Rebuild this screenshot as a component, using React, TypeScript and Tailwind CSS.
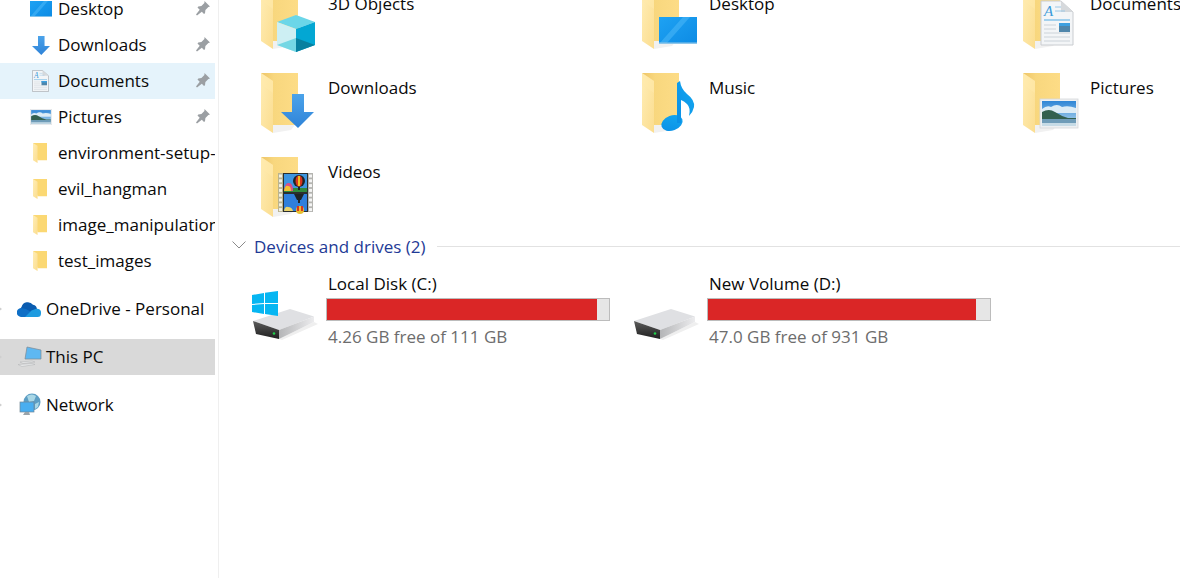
import type { ReactNode } from "react";

const font = "[font-family:'Open_Sans','Noto_Sans',sans-serif]";

function Defs() {
  return (
    <svg className="absolute h-0 w-0" aria-hidden="true">
      <defs>
        <linearGradient id="leaf" x1="0" y1="0" x2="1" y2="1">
          <stop offset="0" stopColor="#ffedb5" />
          <stop offset="1" stopColor="#fbdd8f" />
        </linearGradient>
        <linearGradient id="back" x1="0" y1="0" x2="1" y2="0">
          <stop offset="0" stopColor="#eec568" />
          <stop offset="0.35" stopColor="#f8d77e" />
          <stop offset="1" stopColor="#fddc86" />
        </linearGradient>
        <linearGradient id="sky" x1="0" y1="0" x2="0" y2="1">
          <stop offset="0" stopColor="#2f86d6" />
          <stop offset="1" stopColor="#b9dbee" />
        </linearGradient>
        <linearGradient id="screen" x1="0" y1="0" x2="1" y2="1">
          <stop offset="0" stopColor="#1ea2f3" />
          <stop offset="1" stopColor="#0d8be4" />
        </linearGradient>
        <linearGradient id="arrow" x1="0" y1="0" x2="0" y2="1">
          <stop offset="0" stopColor="#4ba3ea" />
          <stop offset="1" stopColor="#2f83d8" />
        </linearGradient>
        <linearGradient id="note" x1="0" y1="1" x2="1" y2="0">
          <stop offset="0" stopColor="#0a8fe6" />
          <stop offset="1" stopColor="#14a8f0" />
        </linearGradient>
        <linearGradient id="hdd" x1="0" y1="0" x2="1" y2="0">
          <stop offset="0" stopColor="#b4b5b7" />
          <stop offset="1" stopColor="#ececee" />
        </linearGradient>
        <linearGradient id="hddFront" x1="0" y1="0" x2="0" y2="1">
          <stop offset="0" stopColor="#5c5c5c" />
          <stop offset="1" stopColor="#1f1f1f" />
        </linearGradient>
      </defs>
    </svg>
  );
}

function Folder() {
  return (
    <g>
      <polygon points="12,52 34,52 30,57 12,60" fill="#f1f1f1" />
      <polygon points="0,0 37,0 37,52 12,52" fill="url(#back)" />
      <polygon points="0,0 12,8 12,60 0,52" fill="url(#leaf)" />
      <polygon points="0,0 12,8 12,20 0,12" fill="#ffe9a9" opacity="0.5" />
    </g>
  );
}

function ArrowShape() {
  return <polygon points="11,0 23,0 23,18 33,18 17,34 0,18 11,18" fill="url(#arrow)" />;
}

function DocShape({ edge = "#c9ccd0" }: { edge?: string }) {
  return (
    <g>
      <polygon points="0,0 20,0 32,11 32,44 0,44" fill="#f3f5f7" stroke={edge} strokeWidth="1" />
      <polygon points="20,0 32,11 20,11" fill="#d6d9dc" />
      <text x="3" y="15" fontSize="15" fontStyle="italic" fontFamily="Liberation Serif, serif" fill="#3a9ad9">
        A
      </text>
      <path d="M14 6h6M14 10h10" stroke="#9cc8e6" strokeWidth="1" />
      <path d="M3 19h26" stroke="#7fc0e8" strokeWidth="1.400" />
      <rect x="18" y="22" width="11" height="9" fill="#4f86ab" />
      <rect x="18" y="22" width="11" height="3" fill="#3da0e0" />
      <path d="M3 24h12M3 28h12M3 32h26M3 36h26M3 40h26" stroke="#ccd3d9" strokeWidth="1" />
    </g>
  );
}

function PictureShape() {
  return (
    <g>
      <rect x="0" y="0" width="38" height="29" fill="#eef0f2" stroke="#d5d7d9" strokeWidth="0.800" />
      <rect x="2" y="2" width="34" height="25" fill="url(#sky)" />
      <path d="M2 10q5-4 9-2q6-4 11 0q6-2 14 1v5H2z" fill="#dcecf6" />
      <path d="M2 13q7-4 13 0q6 4 13 6h8v2H2z" fill="#33604f" />
      <rect x="2" y="20" width="34" height="7" fill="#6f9cb8" />
      <rect x="2" y="24" width="34" height="3" fill="#c6dbe6" />
    </g>
  );
}

function MonitorShape() {
  return (
    <g>
      <rect x="0" y="0" width="38" height="27" fill="url(#screen)" />
      <polygon points="0,27 24,0 31,0 7,27" fill="#4db8f7" opacity="0.55" />
      <rect x="0" y="25.500" width="38" height="1.500" fill="#8fc7ea" />
    </g>
  );
}

function BigIcon({ children }: { children?: ReactNode }) {
  return (
    <svg width="60" height="64" viewBox="0 0 60 64" className="mt-px block shrink-0 overflow-visible" aria-hidden="true">
      <Folder />
      {children}
    </svg>
  );
}

function Cube() {
  return (
    <g>
      <polygon points="35,26 54,33 35,40 16,33" fill="#6bd6e8" />
      <polygon points="16,33 35,40 35,63 16,56" fill="#cdeff3" />
      <polygon points="54,33 35,40 35,63 54,56" fill="#03a7d3" />
      <polygon points="16,56 35,49 35,63" fill="#74d7e4" />
      <polygon points="54,56 35,49 35,63" fill="#07809f" />
    </g>
  );
}

function MusicNote() {
  return (
    <g fill="url(#note)">
      <ellipse cx="30" cy="50" rx="11" ry="7.500" transform="rotate(-20 30 50)" />
      <path d="M35 10l3-2q1 8 7 13q8 6 7 13q-1 5-5 9q2-8-2-12q-3-3-6-4v23h-4z" />
    </g>
  );
}

function FilmStrip() {
  const holes = [0, 1, 2, 3, 4, 5, 6, 7];
  return (
    <g transform="translate(17 16)">
      <rect x="0" y="0" width="35" height="39" fill="#2c2f2e" />
      <rect x="0" y="0" width="5" height="39" fill="#b9b38f" />
      <rect x="30" y="0" width="5" height="39" fill="#b4b4b0" />
      {holes.map((h) => (
        <g key={h}>
          <rect x="1" y={1.5 + h * 4.8} width="3" height="3" fill="#f1efe2" />
          <rect x="31" y={1.5 + h * 4.8} width="3" height="3" fill="#f4f4f4" />
        </g>
      ))}
      <rect x="6" y="1" width="23" height="18" fill="#3d95e0" />
      <rect x="6" y="21" width="23" height="17" fill="#2f7fdc" />
      <rect x="6" y="15" width="23" height="4" fill="#2f8a3c" />
      <path d="M6 18q1-9 5-8q4 0 4 8z" fill="#d84f8a" />
      <path d="M6 18q1-6 4-5q3 0 3 5z" fill="#f2c230" />
      <circle cx="21" cy="8" r="6" fill="#1f2426" />
      <ellipse cx="21" cy="8" rx="3.500" ry="5.500" fill="#d8361f" />
      <rect x="20" y="3" width="2" height="10" fill="#f0c020" />
      <rect x="20" y="14" width="2" height="3" fill="#20242a" />
      <path d="M16 21h10l-3 6h-4z" fill="#1f2426" />
      <rect x="20" y="27" width="2" height="3" fill="#20242a" />
      <path d="M6 38q1-5 4-4q4 0 5 4z" fill="#e9d26a" />
      <circle cx="22" cy="37" r="4" fill="#e8c030" />
      <rect x="19" y="33" width="2" height="5" fill="#d8361f" />
      <rect x="23" y="33" width="2" height="5" fill="#d8361f" />
    </g>
  );
}

function Drive({ windows }: { windows?: boolean }) {
  return (
    <svg width="74" height="60" viewBox="0 0 74 60" className="block shrink-0 overflow-visible" aria-hidden="true">
      <g transform="translate(0 16)">
        <polygon points="27,50 62,33 66,35 30,51" fill="#efefef" />
        <polygon points="1,32 38,20 62,27.500 27,41" fill="#dfe0e3" />
        <polygon points="27,41 62,27.500 62,33 27,50" fill="url(#hdd)" />
        <polygon points="1,32 27,41 27,50 4,45" fill="url(#hddFront)" />
        <circle cx="22" cy="44.500" r="1.300" fill="#1fd14a" />
      </g>
      {windows && (
        <g fill="#06b6f2" transform="translate(0 19)">
          <polygon points="0,3 12,1 12,11 0,12" />
          <polygon points="13,0.800 26,-1 26,11 13,11" />
          <polygon points="0,13 12,12 12,22 0,20" />
          <polygon points="13,12 26,12 26,24 13,22" />
        </g>
      )}
    </svg>
  );
}

function Tile({ label, icon }: { label: string; icon: ReactNode }) {
  return (
    <div className="flex h-[61px] w-[381px]">
      <div className="w-[67px] shrink-0">{icon}</div>
      <div className="mt-[3px] text-[#0a0a0a]">{label}</div>
    </div>
  );
}

function DriveTile({ label, free, used, windows }: { label: string; free: string; used: string; windows?: boolean }) {
  return (
    <div className="flex w-[381px]">
      <Drive windows={windows} />
      <div>
        <div className="h-[25px] pl-[2px] leading-[21px] text-[#0a0a0a]">{label}</div>
        <div className="h-[23px] w-[284px] border border-[#bcbcbc] bg-[#e6e6e6]">
          <div className={`h-full bg-[#da2626] ${used}`} />
        </div>
        <div className="mt-[5px] pl-[2px] leading-[21px] text-[#6d6d6d]">{free}</div>
      </div>
    </div>
  );
}

function Pin() {
  return (
    <svg width="16" height="16" viewBox="0 0 16 16" className="ml-auto mr-[4px] shrink-0 -translate-y-px" aria-hidden="true">
      <path d="M9.500 1l5.500 5.500-1.600.6-3 3-.4 3.100-1 .8-2.200-2.200L2 15.500l-1-1 3.700-4.800L2.500 7.500l.8-1 3.100-.4 3-3z" fill="#9b9fa3" />
    </svg>
  );
}

function NavRow({
  label,
  icon,
  pinned,
  active,
  indent,
  arrow,
}: {
  label: string;
  icon: ReactNode;
  pinned?: boolean;
  active?: string;
  indent: string;
  arrow?: boolean;
}) {
  return (
    <div className={`flex h-9 w-[215px] items-center overflow-hidden whitespace-nowrap ${active ?? ""}`}>
      <div className="w-[2px] shrink-0 overflow-hidden">
        {arrow ? (
          <svg width="4" height="6" viewBox="0 0 4 6" className="-ml-[2px] block" aria-hidden="true">
            <path d="M0 0l4 3-4 3z" fill="#cfcfcf" />
          </svg>
        ) : null}
      </div>
      <div className={`flex shrink-0 items-center ${indent}`}>{icon}</div>
      <span className="text-[#0a0a0a]">{label}</span>
      {pinned && <Pin />}
    </div>
  );
}

function MiniFolder() {
  return (
    <svg width="14" height="20" viewBox="0 0 37 60" preserveAspectRatio="none" aria-hidden="true">
      <polygon points="0,0 37,0 37,52 12,52" fill="#fbd873" />
      <polygon points="0,0 12,8 12,60 0,52" fill="url(#leaf)" />
    </svg>
  );
}

function Mini({ w, h, vb, children }: { w: number; h: number; vb: string; children: ReactNode }) {
  return (
    <svg width={w} height={h} viewBox={vb} preserveAspectRatio="none" className="block" aria-hidden="true">
      {children}
    </svg>
  );
}

export default function App() {
  return (
    <div className={`flex h-[578px] w-[1180px] overflow-hidden bg-white text-[17px] ${font}`}>
      <Defs />
      {/* nav pane */}
      <aside className="h-full w-[219px] shrink-0 overflow-hidden border-r border-[#efefef]">
        <div className="-mt-[9px] flex flex-col">
          <NavRow
            label="Desktop"
            pinned
            indent="ml-[28px] w-[28px]"
            icon={
              <Mini w={22} h={16} vb="0 0 38 27">
                <MonitorShape />
              </Mini>
            }
          />
          <NavRow
            label="Downloads"
            pinned
            indent="ml-[30px] w-[26px]"
            icon={
              <Mini w={18} h={19} vb="0 0 33 34">
                <ArrowShape />
              </Mini>
            }
          />
          <NavRow
            label="Documents"
            pinned
            active="bg-[#e5f3fb]"
            indent="ml-[30px] w-[26px]"
            icon={
              <Mini w={17} h={22} vb="-1 -1 34 46">
                <DocShape edge="#8f9296" />
              </Mini>
            }
          />
          <NavRow
            label="Pictures"
            pinned
            indent="ml-[28px] w-[28px]"
            icon={
              <Mini w={22} h={16} vb="0 0 38 29">
                <PictureShape />
              </Mini>
            }
          />
          <NavRow label="environment-setup-" indent="ml-[31px] w-[25px]" icon={<MiniFolder />} />
          <NavRow label="evil_hangman" indent="ml-[31px] w-[25px]" icon={<MiniFolder />} />
          <NavRow label="image_manipulation" indent="ml-[31px] w-[25px]" icon={<MiniFolder />} />
          <NavRow label="test_images" indent="ml-[31px] w-[25px]" icon={<MiniFolder />} />
        </div>
        <div className="mt-3">
          <NavRow
            label="OneDrive - Personal"
            arrow
            indent="ml-[15px] w-[29px]"
            icon={
              <svg width="24" height="16" viewBox="0 0 24 16" aria-hidden="true">
                <path d="M4 11a4 4 0 0 1 .5-5A6.500 6.500 0 0 1 16 3.800 5 5 0 0 1 20 8.500L12 13z" fill="#0a5cb0" />
                <path d="M4.500 16a4.500 4.500 0 0 1-.5-9l5 1 5 3 3 5z" fill="#0f6fc6" />
                <path d="M8 16l6.500-6.500 4-1.500a4 4 0 0 1 5.500 4.500A3.500 3.500 0 0 1 20.500 16z" fill="#1e9be0" />
              </svg>
            }
          />
        </div>
        <div className="mt-3">
          <NavRow
            label="This PC"
            arrow
            active="bg-[#d9d9d9]"
            indent="ml-[16px] w-[28px]"
            icon={
              <svg width="24" height="22" viewBox="0 0 24 22" aria-hidden="true">
                <polygon points="9,1 23,4 23,13 7,13" fill="#5eb8f2" stroke="#7c8a94" strokeWidth="0.700" />
                <path d="M2 16l12-1 3 1-12 1.500zM0 18.500l14-1 3 1-13 2z" fill="#e6e7e8" stroke="#b0b2b4" strokeWidth="0.500" />
              </svg>
            }
          />
        </div>
        <div className="mt-3">
          <NavRow
            label="Network"
            arrow
            indent="ml-[17px] w-[27px]"
            icon={
              <svg width="22" height="24" viewBox="0 0 22 24" aria-hidden="true">
                <circle cx="13" cy="9" r="8.500" fill="#5d9ec4" />
                <path d="M8 3q5-3 9 0l-2 5-5 1zM16 11l4-2-1 5-3 2z" fill="#a9d7e6" />
                <rect x="1" y="9" width="14" height="10" fill="#49aef0" stroke="#6f8594" strokeWidth="0.700" />
                <path d="M6 19h4l1 3H4z" fill="#9aa3a9" />
              </svg>
            }
          />
        </div>
      </aside>

      {/* content */}
      <main className="min-w-0 flex-1 overflow-hidden">
        <div className="-mt-[12px] ml-[42px] grid grid-cols-[381px_381px_1fr] gap-y-[23px]">
          <Tile
            label="3D Objects"
            icon={
              <BigIcon>
                <Cube />
              </BigIcon>
            }
          />
          <Tile
            label="Desktop"
            icon={
              <BigIcon>
                <g transform="translate(17 28)">
                  <MonitorShape />
                </g>
              </BigIcon>
            }
          />
          <Tile
            label="Documents"
            icon={
              <BigIcon>
                <g transform="translate(18 12)">
                  <DocShape />
                </g>
              </BigIcon>
            }
          />
          <Tile
            label="Downloads"
            icon={
              <BigIcon>
                <g transform="translate(20 21)">
                  <ArrowShape />
                </g>
              </BigIcon>
            }
          />
          <Tile
            label="Music"
            icon={
              <BigIcon>
                <MusicNote />
              </BigIcon>
            }
          />
          <Tile
            label="Pictures"
            icon={
              <BigIcon>
                <g transform="translate(17 26)">
                  <PictureShape />
                </g>
              </BigIcon>
            }
          />
          <Tile
            label="Videos"
            icon={
              <BigIcon>
                <FilmStrip />
              </BigIcon>
            }
          />
        </div>

        <div className="mt-[18px] flex h-6 items-center">
          <svg width="14" height="8" viewBox="0 0 14 8" className="ml-[13px] shrink-0 -translate-y-[2px]" aria-hidden="true">
            <path d="M.5.500L7 7l6.500-6.500" fill="none" stroke="#8a8a8a" strokeWidth="1" />
          </svg>
          <span className="ml-[8px] whitespace-nowrap text-[#1e3a96]">Devices and drives (2)</span>
          <div className="ml-[11px] h-px flex-1 -translate-y-px bg-[#e2e2e2]" />
        </div>

        <div className="mt-[14px] ml-[33px] flex">
          <DriveTile label="Local Disk (C:)" free="4.26 GB free of 111 GB" used="w-[270px]" windows />
          <DriveTile label="New Volume (D:)" free="47.0 GB free of 931 GB" used="w-[268px]" />
        </div>
      </main>
    </div>
  );
}
